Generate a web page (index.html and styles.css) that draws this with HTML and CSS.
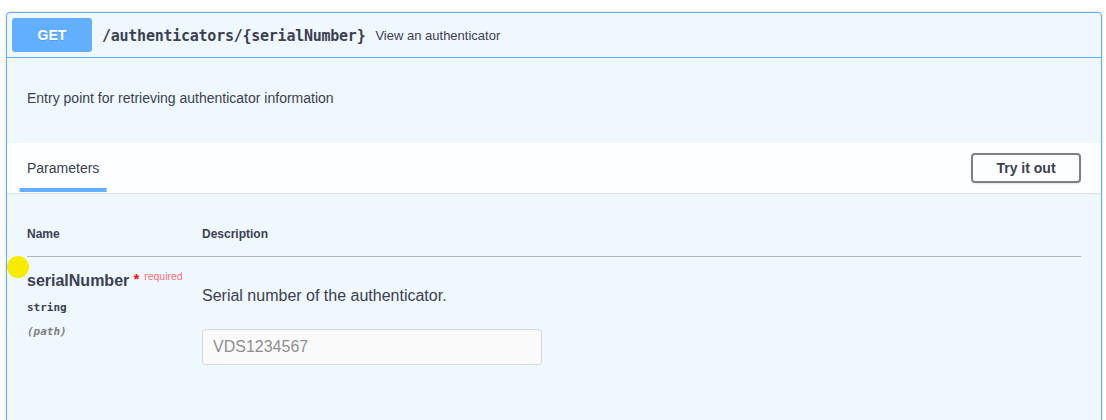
FILE: index.html
```html
<!DOCTYPE html>
<html>
<head>
    <meta charset="UTF-8">
    <title>View an authenticator</title>
    <link rel="stylesheet" href="styles.css">
</head>
<body>
    <div class="opblock">
        <div class="summary">
            <span class="method">GET</span>
            <span class="path">/authenticators/{serialNumber}</span>
            <span class="summary-desc">View an authenticator</span>
        </div>

        <div class="desc-wrapper">
            <p>Entry point for retrieving authenticator information</p>
        </div>

        <div class="section-header">
            <div class="tab-item">
                <h4><span>Parameters</span></h4>
            </div>
            <button type="button" class="try-out">Try it out</button>
        </div>

        <div class="params-wrapper">
            <table class="params">
                <thead>
                    <tr>
                        <th class="col-name">Name</th>
                        <th>Description</th>
                    </tr>
                </thead>
                <tbody>
                    <tr>
                        <td class="col-name">
                            <div class="param-name">serialNumber <span class="star">*</span><span class="required">required</span></div>
                            <div class="param-type">string</div>
                            <div class="param-in">(path)</div>
                        </td>
                        <td class="col-desc">
                            <p>Serial number of the authenticator.</p>
                            <input type="text" class="param-input" placeholder="VDS1234567">
                        </td>
                    </tr>
                </tbody>
            </table>
        </div>

        <span class="cursor-dot"></span>
    </div>
</body>
</html>
```

FILE: styles.css
```css
html {
    overflow: hidden;
}

body {
    margin: 0;
    background: #fff;
    font-family: "Liberation Sans", Arial, sans-serif;
    color: #3b4151;
}

.opblock {
    position: relative;
    margin: 12px 4px 0 6px;
    border: 1px solid #61affe;
    border-radius: 4px;
    background: #eff7ff;
    box-shadow: 0 0 3px rgba(0, 0, 0, .19);
    height: 430px;
}

/* summary bar */

.summary {
    display: flex;
    align-items: center;
    padding: 5px;
    border-bottom: 1px solid #61affe;
}

.method {
    width: 80px;
    height: 34px;
    line-height: 34px;
    text-align: center;
    background: #61affe;
    color: #fff;
    font-size: 14px;
    font-weight: bold;
    border-radius: 3px;
    text-shadow: 0 1px 0 rgba(0, 0, 0, .1);
}

.path {
    padding: 0 10px;
    font-family: "DejaVu Sans Mono", monospace;
    font-size: 15px;
    letter-spacing: -0.25px;
    font-weight: bold;
    position: relative;
    top: 1px;
}

.summary-desc {
    font-size: 13px;
}

/* description */

.desc-wrapper {
    padding: 15px 20px 20px;
}

.desc-wrapper p {
    margin: 16px 0;
    font-size: 14px;
    line-height: 18px;
}

/* section header */

.section-header {
    display: flex;
    align-items: center;
    justify-content: space-between;
    min-height: 50px;
    padding: 0 20px;
    background: rgba(255, 255, 255, .8);
    box-shadow: 0 1px 2px rgba(0, 0, 0, .1);
}

.tab-item h4 {
    margin: 0;
    font-size: 14px;
    font-weight: normal;
}

.tab-item h4 span {
    position: relative;
}

.tab-item h4 span:after {
    content: "";
    position: absolute;
    left: 50%;
    bottom: -16px;
    width: 120%;
    height: 4px;
    transform: translateX(-50%);
    background: #61affe;
}

.try-out {
    width: 110px;
    height: 30px;
    padding: 0;
    border: 2px solid #808080;
    border-radius: 4px;
    background: transparent;
    font-family: "Liberation Sans", Arial, sans-serif;
    font-size: 14px;
    font-weight: bold;
    color: #3b4151;
    box-shadow: 0 1px 2px rgba(0, 0, 0, .1);
}

/* parameters */

.params-wrapper {
    padding: 20px;
}

.params {
    width: 100%;
    border-collapse: collapse;
}

.params th {
    text-align: left;
    font-size: 12px;
    line-height: 14px;
    font-weight: bold;
    padding: 14px 0 15px;
    border-bottom: 1px solid rgba(59, 65, 81, .2);
}

.params .col-name {
    width: 175px;
}

.params td {
    vertical-align: top;
    padding: 14px 0 10px;
}

.param-name {
    font-size: 16px;
    line-height: 19px;
    font-weight: bold;
}

.star {
    color: red;
    font-size: 14px;
    position: relative;
    top: -2px;
}

.required {
    color: rgba(255, 0, 0, .6);
    font-size: 10.5px;
    font-weight: normal;
    position: relative;
    top: -6px;
    margin-left: 5px;
}

.param-type {
    margin-top: 9px;
    font-family: "DejaVu Sans Mono", monospace;
    font-size: 11px;
    line-height: 14px;
    font-weight: bold;
}

.param-in {
    margin-top: 10px;
    font-family: "DejaVu Sans Mono", monospace;
    font-size: 11px;
    line-height: 14px;
    font-weight: bold;
    font-style: italic;
    color: #808080;
}

.col-desc p {
    margin: 15px 0 23px;
    font-size: 16px;
    line-height: 20px;
}

.param-input {
    display: block;
    box-sizing: border-box;
    width: 340px;
    height: 36px;
    padding: 0 10px;
    margin: 0;
    border: 1px solid #d9d9d9;
    border-radius: 4px;
    background: #fafafa;
    font-family: "Liberation Sans", Arial, sans-serif;
    font-size: 16px;
    color: #3b4151;
}

.param-input::placeholder {
    color: #8f8f8f;
}

.cursor-dot {
    position: absolute;
    left: 0;
    top: 243px;
    width: 22px;
    height: 22px;
    border-radius: 50%;
    background: #f7ec00;
}
```
